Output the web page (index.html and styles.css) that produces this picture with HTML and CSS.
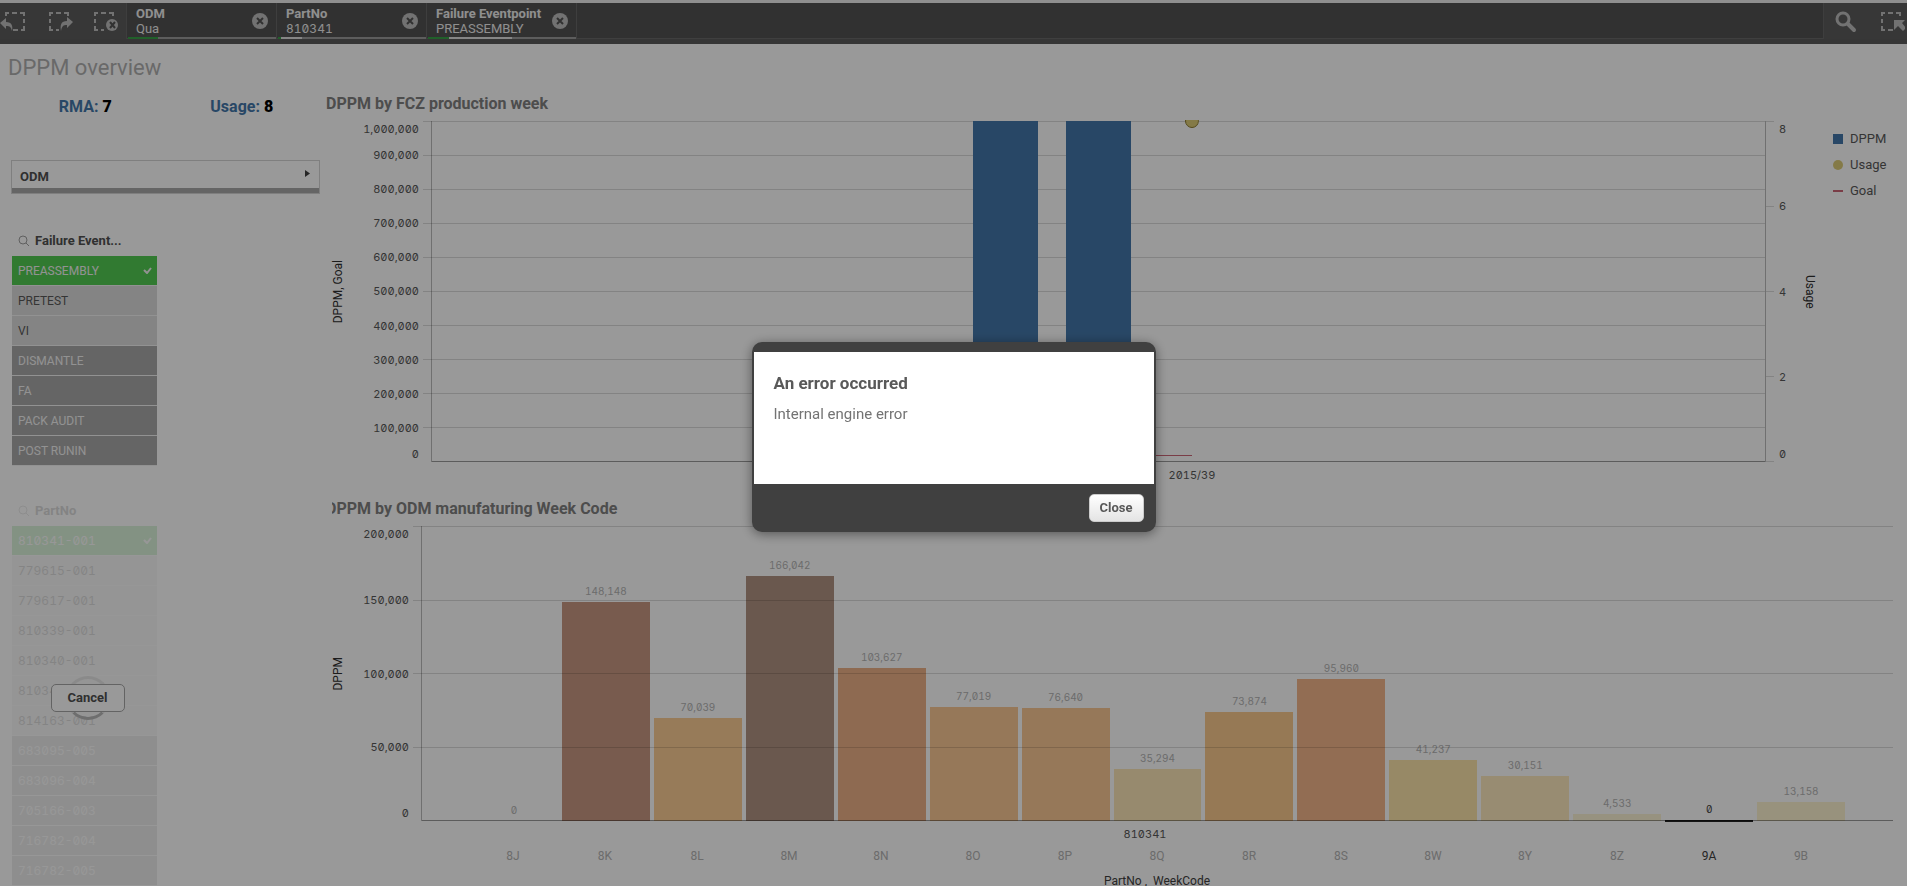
FILE: index.html
```html
<!DOCTYPE html>
<html lang="en">
<head>
<meta charset="utf-8">
<title>DPPM overview</title>
<link rel="stylesheet" href="styles.css">
</head>
<body>
<header class="toolbar">
  <div class="tools">
    <button class="tool" aria-label="Step back"><svg width="28" height="24" viewBox="0 0 28 24"><path class="dash" d="M6 7V4h3M12 4h5M20 4h4v3M24 10v4M24 17v4h-3M18 21h-5"/><path class="fill" d="M0 14l6-5v4c6 0 7 4 6 9-1-4-2-5-6-5v3z"/></svg></button>
    <button class="tool" aria-label="Step forward"><svg width="28" height="24" viewBox="0 0 28 24"><path class="dash" d="M5 7V4h3M11 4h5M19 4h4v3M5 10v4M5 17v4h3M11 21h3"/><path class="fill" d="M28 13l-6-5v4c-6 0-7 4-6 10 1-5 2-6 6-6v3z"/></svg></button>
    <button class="tool" aria-label="Clear all selections"><svg width="28" height="24" viewBox="0 0 28 24"><path class="dash" d="M5 7V4h3M11 4h5M19 4h4v3M5 10v4M5 17v4h3M11 21h3"/><circle class="fill" cx="22" cy="16" r="6"/><path class="cross" d="M20 13l5 6M25 13l-5 6"/></svg></button>
  </div>
  <div class="selections">
    <div class="selection"><div class="names"><b>ODM</b><span>Qua</span></div>
      <button class="clear" aria-label="Clear ODM"><svg width="18" height="18" viewBox="0 0 18 18"><circle class="fill" cx="9" cy="9" r="8"/><path class="cross" d="M6 6l6 6M12 6l-6 6"/></svg></button>
      <div class="share"><i class="green" style="width:20%"></i></div></div>
    <div class="selection"><div class="names"><b>PartNo</b><span class="num-mid">810341</span></div>
      <button class="clear" aria-label="Clear PartNo"><svg width="18" height="18" viewBox="0 0 18 18"><circle class="fill" cx="9" cy="9" r="8"/><path class="cross" d="M6 6l6 6M12 6l-6 6"/></svg></button>
      <div class="share"><i class="green" style="width:2%"></i><i class="light" style="width:14%"></i></div></div>
    <div class="selection"><div class="names"><b>Failure Eventpoint</b><span>PREASSEMBLY</span></div>
      <button class="clear" aria-label="Clear Failure Eventpoint"><svg width="18" height="18" viewBox="0 0 18 18"><circle class="fill" cx="9" cy="9" r="8"/><path class="cross" d="M6 6l6 6M12 6l-6 6"/></svg></button>
      <div class="share"><i class="green" style="width:14%"></i><i class="light" style="width:43%"></i></div></div>
  </div>
  <div class="tools right">
    <button class="tool" aria-label="Search"><svg width="28" height="24" viewBox="0 0 28 24"><circle class="lens" cx="11" cy="10" r="6"/><path class="handle" d="M16 15l6 6"/></svg></button>
    <button class="tool" aria-label="Selections tool"><svg width="28" height="24" viewBox="0 0 28 24"><path class="dash" d="M5 7V4h3M11 4h5M19 4h4v3M5 10v4M5 17v4h3M11 21h5"/><path class="fill" d="M17 11h11l-3 3 4 5-3 3-5-5-4 4z"/></svg></button>
  </div>
</header>

<h1 class="sheet-title">DPPM overview</h1>

<main class="sheet">
  <aside class="sidebar">
    <div class="kpis">
      <div class="kpi">RMA: <b>7</b></div>
      <div class="kpi">Usage: <b>8</b></div>
    </div>
    <button class="drill"><span>ODM</span><svg width="6" height="8" viewBox="0 0 6 8"><path d="M0 0l5 3.500-5 3.500z"/></svg></button>

    <section class="listbox">
      <h2><svg width="12" height="12" viewBox="0 0 12 12"><circle cx="5" cy="5" r="4"/><path d="M8 8l3 3"/></svg>Failure Event...</h2>
      <ul>
        <li class="selected">PREASSEMBLY<svg width="9" height="7" viewBox="0 0 9 7"><path d="M1 3l3 3 4-5"/></svg></li>
        <li class="alternative">PRETEST</li>
        <li class="alternative">VI</li>
        <li>DISMANTLE</li>
        <li>FA</li>
        <li>PACK AUDIT</li>
        <li>POST RUNIN</li>
      </ul>
    </section>

    <section class="listbox pending">
      <div class="dimmed">
        <h2><svg width="12" height="12" viewBox="0 0 12 12"><circle cx="5" cy="5" r="4"/><path d="M8 8l3 3"/></svg>PartNo</h2>
        <ul class="num-list">
          <li class="selected">810341-001<svg width="9" height="7" viewBox="0 0 9 7"><path d="M1 3l3 3 4-5"/></svg></li>
          <li class="alternative">779615-001</li>
          <li class="alternative">779617-001</li>
          <li class="alternative">810339-001</li>
          <li class="alternative">810340-001</li>
          <li class="alternative">810342-001</li>
          <li class="alternative">814163-001</li>
          <li>683095-005</li>
          <li>683096-004</li>
          <li>705166-003</li>
          <li>716782-004</li>
          <li>716782-005</li>
        </ul>
      </div>
      <div class="busy">
        <div class="spinner"></div>
        <button class="cancel">Cancel</button>
      </div>
    </section>
  </aside>

  <div class="charts">
    <section class="chart weekly">
      <h2>DPPM by FCZ production week</h2>
      <div class="frame">
        <div class="axis-title up"><span>DPPM, Goal</span></div>
        <div class="scale">
          <span>1,000,000</span><span>900,000</span><span>800,000</span><span>700,000</span><span>600,000</span><span>500,000</span><span>400,000</span><span>300,000</span><span>200,000</span><span>100,000</span><span>0</span>
        </div>
        <div class="plot">
          <div class="layer week-bars">
            <div class="week"><div class="bar"></div></div>
            <div class="week"><div class="bar"></div></div>
            <div class="week"><div class="dot"></div></div>
          </div>
          <div class="layer goal"><i></i></div>
          <div class="layer lines"><i></i><i></i><i></i><i></i><i></i><i></i><i></i><i></i><i></i><i></i><i></i></div>
          <div class="layer ticks"><i></i><i></i><i></i><i></i><i></i></div>
        </div>
        <div class="scale second"><span>8</span><span>6</span><span>4</span><span>2</span><span>0</span></div>
        <div class="axis-title down"><span>Usage</span></div>
        <ul class="legend">
          <li><i class="square"></i>DPPM</li>
          <li><i class="round"></i>Usage</li>
          <li><i class="line"></i>Goal</li>
        </ul>
        <div class="weeks"><span></span><span></span><span>2015/39</span></div>
      </div>
    </section>

    <section class="chart codes">
      <h2>DPPM by ODM manufaturing Week Code</h2>
      <div class="frame">
        <div class="axis-title up"><span>DPPM</span></div>
        <div class="scale"><span>200,000</span><span>150,000</span><span>100,000</span><span>50,000</span><span>0</span></div>
        <div class="plot">
          <div class="layer code-bars">
            <div class="code"><span>0</span></div>
            <div class="code"><span>148,148</span><div class="bar" style="height:74.100%;background:#c89882"></div></div>
            <div class="code"><span>70,039</span><div class="bar" style="height:35%;background:#fccd94"></div></div>
            <div class="code"><span>166,042</span><div class="bar" style="height:83%;background:#b19382"></div></div>
            <div class="code"><span>103,627</span><div class="bar" style="height:51.800%;background:#edb187"></div></div>
            <div class="code"><span>77,019</span><div class="bar" style="height:38.500%;background:#fac894"></div></div>
            <div class="code"><span>76,640</span><div class="bar" style="height:38.300%;background:#fac894"></div></div>
            <div class="code"><span>35,294</span><div class="bar" style="height:17.600%;background:#fce6b7"></div></div>
            <div class="code"><span>73,874</span><div class="bar" style="height:36.900%;background:#faca8e"></div></div>
            <div class="code"><span>95,960</span><div class="bar" style="height:48%;background:#f3b68a"></div></div>
            <div class="code"><span>41,237</span><div class="bar" style="height:20.600%;background:#fce4aa"></div></div>
            <div class="code"><span>30,151</span><div class="bar" style="height:15.100%;background:#fde9be"></div></div>
            <div class="code"><span>4,533</span><div class="bar" style="height:2.300%;background:#fcf3d5"></div></div>
            <div class="code active"><span>0</span><div class="bar"></div></div>
            <div class="code"><span>13,158</span><div class="bar" style="height:6.600%;background:#fdf3d0"></div></div>
          </div>
          <div class="layer lines"><i></i><i></i><i></i><i></i><i></i></div>
        </div>
        <div class="footer">
          <div class="group">810341</div>
          <div class="code-names">
            <span>8J</span><span>8K</span><span>8L</span><span>8M</span><span>8N</span><span>8O</span><span>8P</span><span>8Q</span><span>8R</span><span>8S</span><span>8W</span><span>8Y</span><span>8Z</span><span class="active">9A</span><span>9B</span>
          </div>
          <div class="dimension">PartNo ,&nbsp; WeekCode</div>
        </div>
      </div>
    </section>
  </div>
</main>

<div class="backdrop">
  <div class="dialog" role="alertdialog" aria-labelledby="dialog-title" aria-describedby="dialog-text">
    <div class="message">
      <h2 id="dialog-title">An error occurred</h2>
      <p id="dialog-text">Internal engine error</p>
    </div>
    <div class="actions"><button class="close">Close</button></div>
  </div>
</div>
</body>
</html>
```
FILE: styles.css
```css
* { box-sizing: border-box; }
body {
  margin: 0;
  height: 100vh;
  overflow: hidden;
  display: flex;
  flex-direction: column;
  background: #fff;
  color: #595959;
  font: 13px/16px Roboto, sans-serif;
}
h1, h2, p, ul { margin: 0; padding: 0; }
ul { list-style: none; }
button { font: inherit; color: inherit; border: 0; padding: 0; background: none; }
svg { display: block; flex: none; }

/* Selections bar */
.toolbar {
  flex: none;
  display: flex;
  height: 44px;
  border-top: 3px solid #efefef;
  border-bottom: 5px solid #5a5a5a;
  background: #535353;
  color: #eee;
  box-shadow: inset 0 -1px #6a6a6a;
}
.tools { display: flex; align-items: center; width: 127px; background: #5d5d5d; border-right: 1px solid #686868; gap: 17px; }
.tools.right { width: 84px; margin-left: auto; border-right: 0; border-left: 1px solid #686868; padding-left: 8px; overflow: hidden; }
.tool { width: 28px; flex: none; }
.fill { fill: #bebebe; }
.dash { fill: none; stroke: #bebebe; stroke-width: 2; }
.cross { fill: none; stroke: #535353; stroke-width: 2; }
.lens { fill: none; stroke: #bebebe; stroke-width: 3; }
.handle { stroke: #bebebe; stroke-width: 4; stroke-linecap: round; }
.selections { display: flex; }
.selection {
  width: 150px;
  display: grid;
  grid-template-columns: 1fr 25px;
  grid-template-rows: 1fr 2px;
  border-right: 1px solid #686868;
  align-items: center;
}
.names { display: flex; flex-direction: column; padding: 2px 0 0 9px; line-height: 15px; white-space: nowrap; }
.clear { padding-top: 2px; }
.share { grid-column: 1 / 3; display: flex; height: 2px; margin-left: 1px; background: #9c9c9c; }
.share .green { background: #38a046; }
.share .light { background: #e0e0e0; }

.sheet-title { flex: none; height: 46px; padding: 0 8px; font-size: 22px; line-height: 48px; font-weight: 400; color: #b0b0b0; }
.sheet { flex: 1; min-height: 0; display: grid; grid-template-columns: 323px minmax(0, 1fr); }

/* Sidebar */
.sidebar { display: flex; flex-direction: column; padding-right: 3px; }
.kpis { display: grid; grid-template-columns: 1fr 1fr; padding-left: 7px; margin-bottom: 36px; }
.kpi { text-align: center; font-size: 16px; line-height: 34px; font-weight: 700; color: #4477aa; }
.kpi b { color: #000; }
.drill {
  display: flex;
  justify-content: space-between;
  flex: none;
  height: 34px;
  margin-left: 11px;
  padding: 0 8px;
  border: 1px solid #d4d4d4;
  box-shadow: inset 0 -5px #a9a9a9;
  font-weight: 700;
  line-height: 32px;
}
.drill svg { margin-top: 9px; fill: #404040; }
.listbox { width: 145px; margin: 30px 0 0 12px; }
.listbox h2 { display: flex; align-items: center; gap: 5px; height: 32px; padding: 2px 0 0 6px; font-size: 13px; }
.listbox h2 svg { fill: none; stroke: #a0a0a0; stroke-width: 1; }
.drill, .listbox h2 { color: #505050; }
.listbox li {
  display: flex;
  align-items: center;
  justify-content: space-between;
  height: 30px;
  padding: 0 5px 0 6px;
  border-bottom: 1px solid #f4f4f4;
  background: #a9a9a9;
  color: #f4f4f4;
  font-size: 12px;
}
.listbox li.alternative { background: #ddd; color: #595959; }
.listbox li.selected { background: #52cc52; }
.listbox li svg { fill: none; stroke: #f4f4f4; stroke-width: 2; }
.num-list, .num-mid { font-family: Inter, sans-serif; font-size: 12px; font-feature-settings: "zero", "tnum"; }
.pending { margin-top: 28px; position: relative; }
.dimmed { opacity: .2; }
.busy {
  position: absolute;
  inset: 15px 0 0;
  display: grid;
  place-items: center;
  margin-left: 6px;
}
.busy > * { grid-area: 1 / 1; }
.spinner { width: 44px; height: 44px; border: 3px solid #e6e6e6; border-bottom-color: #b8b8b8; border-radius: 50%; }
.cancel { width: 74px; height: 28px; border: 1px solid #a6a6a6; border-radius: 5px; background: #fff; font-weight: 700; color: #505050; position: relative; }

/* Charts */
.charts { display: grid; grid-template-rows: 405fr 391fr; min-height: 0; }
.chart { display: flex; flex-direction: column; min-height: 0; }
.chart h2 { flex: none; height: 31px; font-size: 16px; line-height: 28px; color: #808080; white-space: nowrap; }
.weekly h2 { padding-left: 3px; }
.codes h2 { margin-left: 9px; text-indent: -6px; overflow: hidden; }
.frame { flex: 1; min-height: 0; display: grid; }
.weekly .frame { grid-template: 1fr 33px / 30px 66px minmax(0, 1fr) 32px 24px 85px; }
.codes .frame { grid-template: 1fr 65px / 30px 56px minmax(0, 1fr); padding-right: 14px; }
.axis-title { display: grid; place-items: center; font-size: 12px; color: #303030; white-space: nowrap; }
.axis-title span { writing-mode: vertical-rl; }
.axis-title.up span { transform: rotate(180deg); }
.scale, .code-bars, .weeks, .group { font-family: Inter, sans-serif; font-size: 11px; font-feature-settings: "zero", "tnum"; }
.scale { display: flex; flex-direction: column; justify-content: space-between; line-height: 16px; text-align: right; }
.scale span { height: 0; display: flex; align-items: center; justify-content: flex-end; }
.scale span:first-child { align-items: flex-start; }
.scale span:last-child { align-items: flex-end; }
.scale.second { padding-left: 13px; }
.scale.second span { justify-content: flex-start; }
.plot { display: grid; margin-left: 12px; border-left: 1px solid #bbb; min-height: 0; }
.weekly .plot { border-right: 1px solid #bbb; }
.layer { grid-area: 1 / 1; min-height: 0; min-width: 0; }
.lines, .ticks { display: flex; flex-direction: column; justify-content: space-between; }
.lines { margin-left: -9px; }
.lines i, .ticks i { height: 1px; background: rgba(0, 0, 0, .14); }
.lines i:last-child { margin-left: 9px; background: rgba(0, 0, 0, .4); }
.weekly .lines { z-index: 0; }
.ticks { justify-self: end; width: 8px; margin-right: -9px; }
.week-bars { display: flex; justify-content: center; z-index: 1; }
.week { width: 7%; display: flex; justify-content: center; }
.week .bar { width: 70%; background: #4477aa; }
.dot { width: 14px; height: 14px; margin-top: -7px; border: 1px solid #8a7a2d; border-radius: 50%; background: #ddcc77; clip-path: inset(6px 0 0); }
.goal { display: flex; justify-content: center; align-items: flex-end; z-index: 2; }
.goal i { width: 14%; height: 1px; margin-bottom: 6px; background: #cc6677; }
.weeks { grid-column: 3; display: flex; justify-content: center; padding-top: 5px; margin-left: 12px; }
.weeks span { width: 7%; text-align: center; }
.legend { padding: 5px 0 0 11px; }
.legend li { display: flex; align-items: center; gap: 7px; height: 26px; }
.legend i { width: 10px; height: 10px; }
.square { background: #4477aa; }
.round { background: #ddcc77; border-radius: 50%; }
.legend .line { height: 2px; background: #cc6677; }

.code-bars, .code-names { display: flex; padding: 0 3.125%; }
.code { flex: 1; display: flex; flex-direction: column; justify-content: flex-end; padding: 0 2px; min-width: 0; font-size: 10px; text-align: center; color: #b4b4b4; }
.code span { padding-bottom: 3px; }
.code .bar { flex: none; }
.code.active, .code-names .active { color: #404040; }
.code.active .bar { height: 2px; margin-bottom: -1px; background: #222; }
.footer { grid-column: 3; margin-left: 12px; padding-top: 5px; text-align: center; }
.group { padding-right: 24px; }
.code-names { padding-top: 6px; color: #b4b4b4; font-size: 12px; }
.code-names span { flex: 1; }
.dimension { padding-top: 9px; font-size: 12px; color: #404040; }

/* Error dialog */
.backdrop { position: fixed; inset: 0; z-index: 10; display: grid; place-items: center; padding-bottom: 12px; background: rgba(0, 0, 0, .4); }
.dialog { width: 404px; padding: 10px 2px 0; border-radius: 10px; background: #404040; box-shadow: 0 2px 12px rgba(0, 0, 0, .45); }
.message { min-height: 132px; padding: 20px; background: #fff; }
.message h2 { font-size: 17px; line-height: 22px; }
.message p { margin-top: 10px; font-size: 15px; line-height: 20px; color: #737373; }
.actions { display: flex; justify-content: flex-end; padding: 10px; }
.close { width: 55px; height: 28px; border: 1px solid #ccc; border-radius: 5px; background: linear-gradient(#fff, #e4e4e4); font-weight: 700; }
```
